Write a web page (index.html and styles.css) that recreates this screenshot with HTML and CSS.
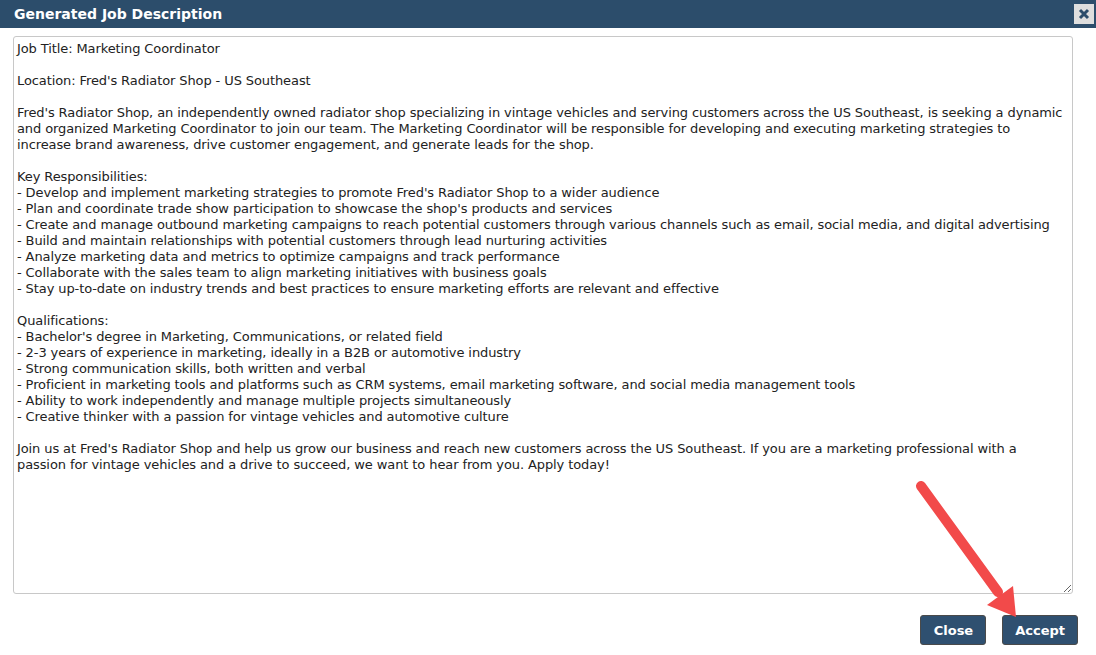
FILE: index.html
```html
<!DOCTYPE html>
<html lang="en">
<head>
    <meta charset="UTF-8">
    <title>Generated Job Description</title>
    <link rel="stylesheet" href="styles.css">
</head>
<body>
<div class="dialog">
    <div class="dialog-titlebar">
        <span class="dialog-title">Generated Job Description</span>
        <button class="dialog-close" title="Close">
            <svg width="12" height="12" viewBox="0 0 12 12"><path d="M2 2 L10 10 M10 2 L2 10" stroke="#2c4d6b" stroke-width="3"/></svg>
        </button>
    </div>
    <div class="dialog-content">
        <textarea class="job-text" id="jobText" wrap="off" spellcheck="false">Job Title: Marketing Coordinator

Location: Fred's Radiator Shop - US Southeast

Fred's Radiator Shop, an independently owned radiator shop specializing in vintage vehicles and serving customers across the US Southeast, is seeking a dynamic
and organized Marketing Coordinator to join our team. The Marketing Coordinator will be responsible for developing and executing marketing strategies to
increase brand awareness, drive customer engagement, and generate leads for the shop.

Key Responsibilities:
- Develop and implement marketing strategies to promote Fred's Radiator Shop to a wider audience
- Plan and coordinate trade show participation to showcase the shop's products and services
- Create and manage outbound marketing campaigns to reach potential customers through various channels such as email, social media, and digital advertising
- Build and maintain relationships with potential customers through lead nurturing activities
- Analyze marketing data and metrics to optimize campaigns and track performance
- Collaborate with the sales team to align marketing initiatives with business goals
- Stay up-to-date on industry trends and best practices to ensure marketing efforts are relevant and effective

Qualifications:
- Bachelor's degree in Marketing, Communications, or related field
- 2-3 years of experience in marketing, ideally in a B2B or automotive industry
- Strong communication skills, both written and verbal
- Proficient in marketing tools and platforms such as CRM systems, email marketing software, and social media management tools
- Ability to work independently and manage multiple projects simultaneously
- Creative thinker with a passion for vintage vehicles and automotive culture

Join us at Fred's Radiator Shop and help us grow our business and reach new customers across the US Southeast. If you are a marketing professional with a
passion for vintage vehicles and a drive to succeed, we want to hear from you. Apply today!</textarea>
    </div>
    <div class="dialog-buttons">
        <button class="btn btn-close">Close</button>
        <button class="btn btn-accept">Accept</button>
    </div>
</div>
<!-- annotation arrow over the accept button -->
<svg class="arrow" width="1096" height="655" viewBox="0 0 1096 655">
    <line x1="921" y1="486" x2="998" y2="592" stroke="#f24a4a" stroke-width="10" stroke-linecap="round"/>
    <polygon points="1016,617 987,605 1013,586" fill="#f24a4a"/>
</svg>
<script>
    // caret at the end of the generated text
    const jobText = document.getElementById('jobText');
    jobText.focus();
    jobText.setSelectionRange(jobText.value.length, jobText.value.length);
</script>
</body>
</html>
```

FILE: styles.css
```css
body {
    margin: 0;
    font-family: 'DejaVu Sans', Verdana, sans-serif;
    background: #fff;
    overflow: hidden;
}
.dialog {
    width: 1096px;
    height: 655px;
    display: flex;
    flex-direction: column;
}
.dialog-titlebar {
    height: 28px;
    background-color: #2c4d6b;
    display: flex;
    align-items: center;
    justify-content: space-between;
    padding: 0 2px 0 14px;
    box-sizing: border-box;
}
.dialog-title {
    color: #fff;
    font-weight: bold;
    font-size: 14px;
}
.dialog-close {
    width: 20px;
    height: 20px;
    padding: 0;
    border: none;
    background: #dedede;
    display: flex;
    align-items: center;
    justify-content: center;
    cursor: pointer;
}
.dialog-content {
    padding: 8px 23px 0 13px;
}
.job-text {
    display: block;
    width: 1060px;
    height: 558px;
    box-sizing: border-box;
    border: 1px solid #c8c8c8;
    border-radius: 3px;
    padding: 4px 3px 3px;
    font-family: 'DejaVu Sans', Verdana, sans-serif;
    font-size: 13px;
    line-height: 16px;
    letter-spacing: -0.1px;
    color: #222;
    overflow: hidden;
    resize: both;
    outline: none;
}
.dialog-buttons {
    display: flex;
    justify-content: flex-end;
    gap: 16px;
    padding: 21px 18px 0 0;
}
.btn {
    height: 30px;
    padding: 0 13px;
    background-color: #2f5070;
    color: #fff;
    border: 1px solid #4a4a4a;
    border-radius: 3px;
    font-family: 'DejaVu Sans', Verdana, sans-serif;
    font-weight: bold;
    font-size: 13px;
    cursor: pointer;
}
.btn-close {
    padding: 0 12px 0 13px;
}
.btn-accept {
    padding: 0 12px;
}
.arrow {
    position: absolute;
    top: 0;
    left: 0;
    pointer-events: none;
}
```
